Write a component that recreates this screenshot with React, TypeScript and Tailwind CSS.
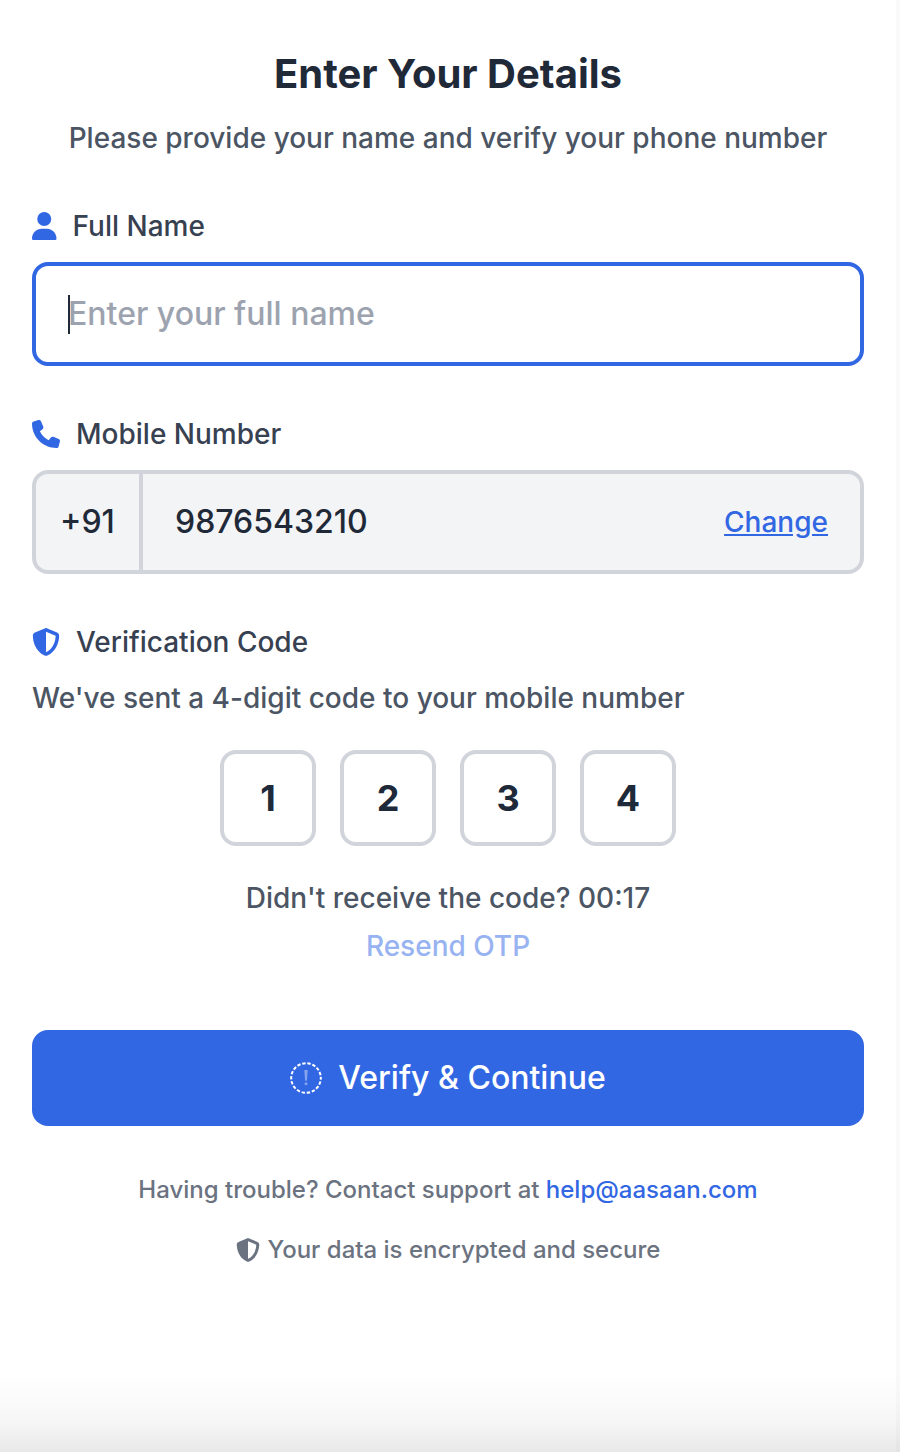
import { FaUser, FaPhone, FaShieldHalved } from "react-icons/fa6";

export default function App() {
  return (
    <div className="h-[1452px] w-[900px] overflow-hidden bg-[linear-gradient(to_bottom,#0000_1370px,#00000004_1400px,#0000000a_1424px,#00000017_1452px),linear-gradient(to_right,#fff_896px,#fafafa_896px)] font-['Inter',sans-serif] font-medium text-gray-800">
      <main className="mr-1 px-8 pt-12">
        <h1 className="text-center text-[40px] leading-[52px] font-bold text-[#1f2937]">Enter Your Details</h1>
        <p className="mt-[18px] text-center text-[28px] leading-[40px] text-[#4b5563]">Please provide your name and verify your phone number</p>

        <label className="mt-12 flex h-10 items-center gap-4 text-[28px] text-[#374151]">
          <FaUser className="h-7 w-[24.5px] text-[#3267e3]" />
          Full Name
        </label>
        <div className="mt-4 flex h-[104px] items-center rounded-2xl border-4 border-[#3267e3] bg-white pl-8 text-[32px] text-[#9ca3af]">
          <span className="mt-px -mr-0.5 h-[39px] w-0.5 bg-[#1f2937]" />
          Enter your full name
        </div>

        <label className="mt-12 flex h-10 items-center gap-4 text-[28px] text-[#374151]">
          <FaPhone className="size-7 text-[#3267e3]" />
          Mobile Number
        </label>
        <div className="mt-4 flex h-[104px] items-center rounded-2xl border-4 border-[#d1d5db] bg-[#f3f4f6] text-[32px] text-[#1f2937]">
          <div className="flex h-full w-[107px] items-center justify-center border-r-4 border-[#d1d5db]">+91</div>
          <span className="pl-8">9876543210</span>
          <a className="mr-8 ml-auto text-[28px] text-[#3267e3] underline">Change</a>
        </div>

        <label className="mt-12 flex h-10 items-center gap-4 text-[28px] text-[#374151]">
          <FaShieldHalved className="size-7 text-[#3267e3]" />
          Verification Code
        </label>
        <p className="mt-4 text-[28px] leading-[40px] text-[#4b5563]">We've sent a 4-digit code to your mobile number</p>
        <div className="mt-8 flex justify-center gap-6">
          {["1", "2", "3", "4"].map((d) => (
            <div key={d} className="flex size-24 items-center justify-center rounded-2xl border-4 border-[#d1d5db] bg-white text-[36px] font-bold">
              {d}
            </div>
          ))}
        </div>
        <p className="mt-8 text-center text-[28px] leading-[40px] text-[#4b5563]">Didn't receive the code? 00:17</p>
        <p className="mt-2 text-center text-[28px] leading-[40px] text-[#98b3f1]">Resend OTP</p>

        <button className="mt-16 flex h-24 w-full items-center justify-center gap-4 rounded-2xl bg-[#3267e3] text-[32px] text-white">
          <svg className="size-8" viewBox="0 0 32 32" fill="none" stroke="currentColor">
            <circle cx="16" cy="16" r="14.8" strokeWidth="2" strokeDasharray="3.4 1.766" strokeDashoffset="1.7" />
            <path d="M14.3 8h3.4l-.8 10.8h-1.8z" fill="currentColor" stroke="none" opacity=".4" />
            <circle cx="16" cy="21.8" r="1.5" fill="currentColor" stroke="none" opacity=".4" />
          </svg>
          Verify &amp; Continue
        </button>

        <p className="mt-12 text-center text-[24px] leading-8 text-[#6b7280]">
          Having trouble? Contact support at <a className="text-[#3267e3]">help@aasaan.com</a>
        </p>
        <p className="mt-7 flex items-center justify-center gap-2 text-[24px] leading-8 text-[#6b7280]">
          <FaShieldHalved className="size-6" />
          Your data is encrypted and secure
        </p>
      </main>
    </div>
  );
}
